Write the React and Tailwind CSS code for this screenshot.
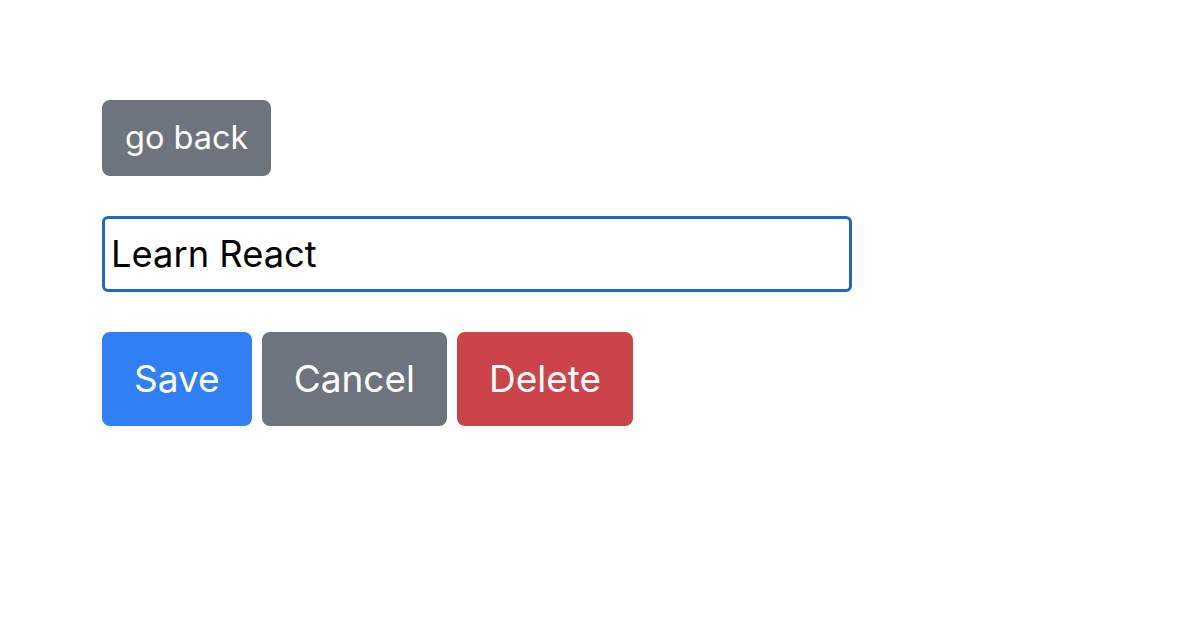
export default function App() {
  return (
    <div
      className="min-h-screen bg-white px-[102px] pt-[100px]"
      style={{ fontFamily: "Inter, 'Noto Sans', sans-serif" }}
    >
      <div>
        <button className="rounded-[8px] border-2 border-[#6c757d] bg-[#6c757d] px-[21px] py-[12px] text-[32.5px] leading-[48px] text-white">
          go back
        </button>
      </div>
      <div className="mt-[40px]">
        <input
          defaultValue="Learn React"
          className="h-[76px] w-[750px] rounded-[6px] border-[3px] border-[#2563c4] px-[6px] text-[36.3px] text-black outline-none"
        />
      </div>
      <div className="mt-[40px] flex gap-[10px]">
        <button className="rounded-[8px] border-2 border-[#307ff5] bg-[#307ff5] px-[30px] py-[16px] text-[37px] leading-[58px] text-white">
          Save
        </button>
        <button className="rounded-[8px] border-2 border-[#6c757d] bg-[#6c757d] px-[30px] py-[16px] text-[37px] leading-[58px] text-white">
          Cancel
        </button>
        <button className="rounded-[8px] border-2 border-[#cb444a] bg-[#cb444a] px-[30px] py-[16px] text-[37px] leading-[58px] text-white">
          Delete
        </button>
      </div>
    </div>
  );
}
